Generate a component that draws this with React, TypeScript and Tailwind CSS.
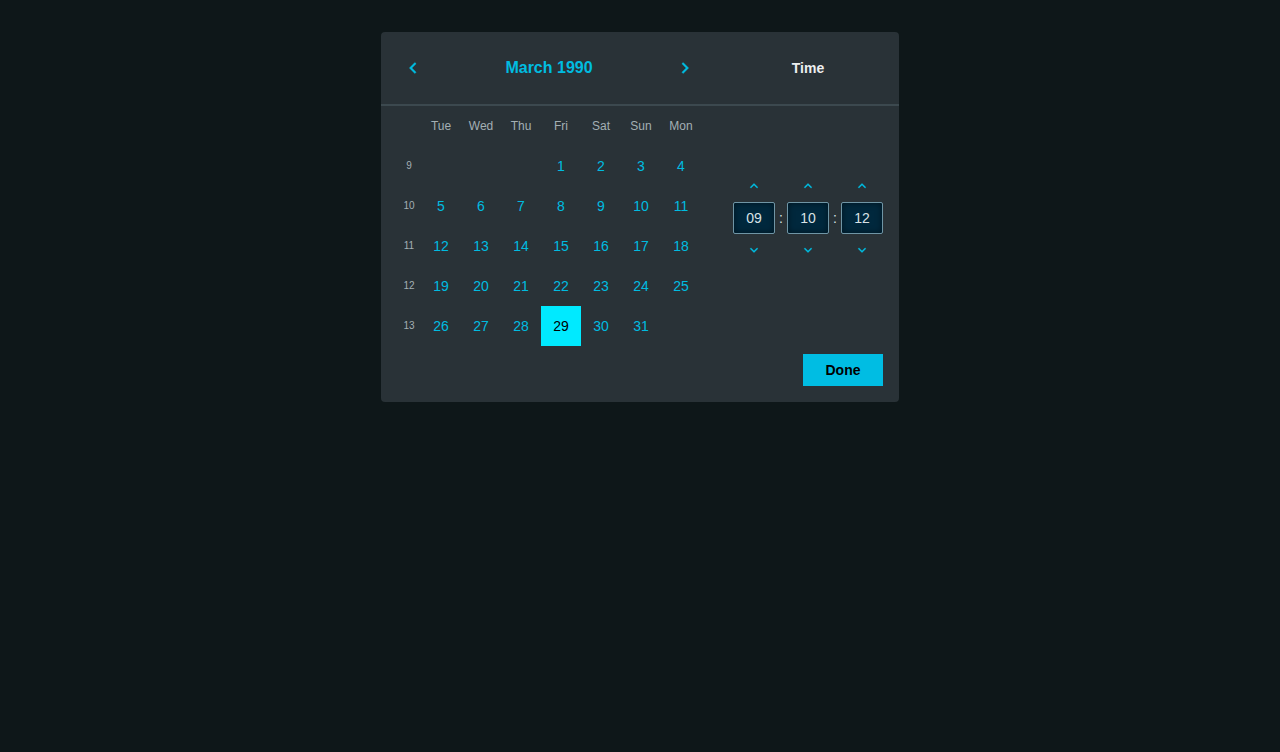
import { useState } from "react";

const weekdays = ["Tue", "Wed", "Thu", "Fri", "Sat", "Sun", "Mon"];

const weeks: { week: number; days: (number | null)[] }[] = [
  { week: 9, days: [null, null, null, 1, 2, 3, 4] },
  { week: 10, days: [5, 6, 7, 8, 9, 10, 11] },
  { week: 11, days: [12, 13, 14, 15, 16, 17, 18] },
  { week: 12, days: [19, 20, 21, 22, 23, 24, 25] },
  { week: 13, days: [26, 27, 28, 29, 30, 31, null] },
];

const chevrons = {
  left: "M15.41 7.41 14 6l-6 6 6 6 1.41-1.41L10.83 12z",
  right: "M10 6 8.59 7.41 13.17 12l-4.58 4.59L10 18l6-6z",
  up: "M12 8l-6 6 1.41 1.41L12 10.83l4.59 4.58L18 14z",
  down: "M16.59 8.59 12 13.17 7.41 8.59 6 10l6 6 6-6z",
};

function Chevron({ direction, className }: { direction: keyof typeof chevrons; className: string }) {
  return (
    <svg viewBox="0 0 24 24" fill="currentColor" stroke="currentColor" aria-hidden="true" className={className}>
      <path d={chevrons[direction]} />
    </svg>
  );
}

function MonthButton({ direction, label }: { direction: "left" | "right"; label: string }) {
  return (
    <button type="button" aria-label={label} className="flex size-8 items-center justify-center text-[#00bce0]">
      <Chevron direction={direction} className="size-[22px] stroke-[0.4]" />
    </button>
  );
}

function Spinner({ label, initial, max }: { label: string; initial: number; max: number }) {
  const [value, setValue] = useState(String(initial).padStart(2, "0"));
  const step = (by: number) =>
    setValue((current) => String((Number(current) + by + max) % max).padStart(2, "0"));

  return (
    <div className="flex min-w-0 flex-1 flex-col">
      <button
        type="button"
        aria-label={`Increase ${label}`}
        onClick={() => step(1)}
        className="flex h-8 items-center justify-center text-[#00bce0]"
      >
        <Chevron direction="up" className="size-4 stroke-[0.2]" />
      </button>
      <input
        aria-label={label}
        value={value}
        onChange={(event) => setValue(event.target.value)}
        className="h-8 w-full rounded-xs border border-[#6f95a5] bg-[#00283d] text-center text-sm text-[#d8e2e6] shadow-[inset_0_0_6px_rgba(0,0,0,0.5)] outline-none"
      />
      <button
        type="button"
        aria-label={`Decrease ${label}`}
        onClick={() => step(-1)}
        className="flex h-8 items-center justify-center text-[#00bce0]"
      >
        <Chevron direction="down" className="size-4 stroke-[0.2]" />
      </button>
    </div>
  );
}

export default function App() {
  const [selected, setSelected] = useState(29);

  return (
    <main className="flex min-h-screen items-start justify-center bg-[#0e1719] py-8 font-['Liberation_Sans',Arial,sans-serif]">
      <section aria-label="Date and time" className="rounded bg-[#293237]">
        <header className="flex border-b-2 border-[#3c494f]">
          <div className="flex flex-1 items-center justify-between px-4 py-5">
            <MonthButton direction="left" label="Previous month" />
            <h2 className="text-base font-bold text-[#00bce0]">March 1990</h2>
            <MonthButton direction="right" label="Next month" />
          </div>
          <div className="flex w-[182px] items-center justify-center">
            <h2 className="text-sm font-bold text-[#eceff0]">Time</h2>
          </div>
        </header>

        <div className="flex">
          <div className="px-4">
            <table className="table-fixed border-collapse text-center">
              <thead>
                <tr className="h-10 text-xs text-[#a3afb4]">
                  <td className="w-6 p-0" />
                  {weekdays.map((day) => (
                    <th key={day} scope="col" className="w-10 p-0 font-normal">
                      {day}
                    </th>
                  ))}
                </tr>
              </thead>
              <tbody>
                {weeks.map(({ week, days }) => (
                  <tr key={week} className="h-10">
                    <th scope="row" className="p-0 text-[10px] leading-4 font-normal text-[#a3afb4]">
                      {week}
                    </th>
                    {days.map((day, index) => (
                      <td key={index} className="p-0">
                        {day !== null && (
                          <button
                            type="button"
                            aria-pressed={day === selected}
                            onClick={() => setSelected(day)}
                            className={
                              day === selected
                                ? "block size-10 bg-[#00eaff] text-sm text-black"
                                : "block size-10 text-sm text-[#00bce0]"
                            }
                          >
                            {day}
                          </button>
                        )}
                      </td>
                    ))}
                  </tr>
                ))}
              </tbody>
            </table>
          </div>

          <div className="flex w-[182px] items-start px-4 pt-16">
            <Spinner label="Hours" initial={9} max={24} />
            <span className="w-3 py-8 text-center text-sm leading-8 text-[#d8e2e6]">:</span>
            <Spinner label="Minutes" initial={10} max={60} />
            <span className="w-3 py-8 text-center text-sm leading-8 text-[#d8e2e6]">:</span>
            <Spinner label="Seconds" initial={12} max={60} />
          </div>
        </div>

        <footer className="flex justify-end px-4 pt-2 pb-4">
          <button type="button" className="h-8 w-20 bg-[#00bde3] text-sm font-bold text-black">
            Done
          </button>
        </footer>
      </section>
    </main>
  );
}
